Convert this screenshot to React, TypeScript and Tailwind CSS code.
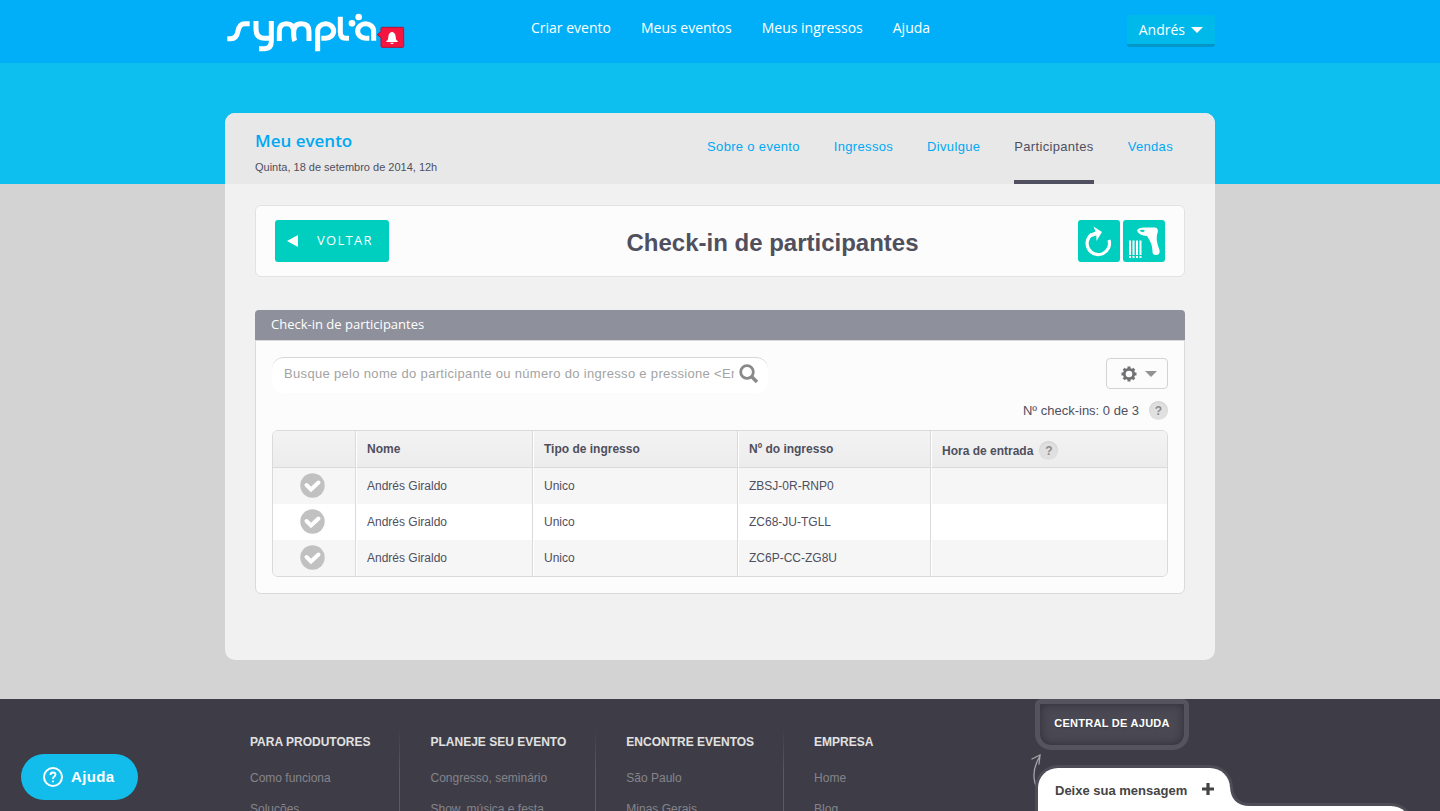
import React from "react";

interface Participant {
  name: string;
  ticketType: string;
  ticketNumber: string;
  entryTime: string;
}

interface FooterColumnProps {
  title: string;
  links: string[];
  last?: boolean;
}

const mainLinks = ["Criar evento", "Meus eventos", "Meus ingressos", "Ajuda"];

const tabs = ["Sobre o evento", "Ingressos", "Divulgue", "Participantes", "Vendas"];

const participants: Participant[] = [
  { name: "Andrés Giraldo", ticketType: "Unico", ticketNumber: "ZBSJ-0R-RNP0", entryTime: "" },
  { name: "Andrés Giraldo", ticketType: "Unico", ticketNumber: "ZC68-JU-TGLL", entryTime: "" },
  { name: "Andrés Giraldo", ticketType: "Unico", ticketNumber: "ZC6P-CC-ZG8U", entryTime: "" },
];

const footerColumns = [
  { title: "PARA PRODUTORES", links: ["Como funciona", "Soluções"] },
  { title: "PLANEJE SEU EVENTO", links: ["Congresso, seminário", "Show, música e festa"] },
  { title: "ENCONTRE EVENTOS", links: ["São Paulo", "Minas Gerais"] },
  { title: "EMPRESA", links: ["Home", "Blog"] },
];

const Logo: React.FC = () => (
  <svg viewBox="0 0 540 120" className="h-10 w-[180px]" role="img" aria-label="Sympla">
    <g fill="none" stroke="#fff" strokeWidth="15">
      <path d="M4 80H14Q32 80 36 57Q40 35 57 35H71" />
      <path d="M90 27V50Q90 79 116 79H134M136 27V88Q136 110 116 110H99" />
      <path d="M160 87V58Q160 35 181 35Q203 35 203 58V64Q203 80 206 87M203 62Q203 35 226 35Q249 35 249 58V87" />
      <path d="M275 118V57A24 22 0 1 1 299 79H286" />
      <path d="M343 14V60Q343 79 359 79H369" />
      <path d="M443 86V57A24 22 0 1 0 419 79H430" />
    </g>
    <circle cx="378" cy="34" r="10" fill="#fff" />
    <circle cx="398" cy="15" r="10" fill="#fff" />
    <path
      d="M468 46H530Q533 46 533 49V103Q533 106 530 106H468Q465 106 465 103V77L454 68L465 59V49Q465 46 468 46Z"
      fill="#f6153f"
      stroke="#b3143a"
      strokeWidth="3"
    />
    <path
      d="M495 61Q498 57 501 61Q509 64 509 76Q509 84 515 87V90H481V87Q487 84 487 76Q487 64 495 61ZM492 92H504Q502 96 498 96Q494 96 492 92Z"
      fill="#fff"
    />
  </svg>
);

const HelpBadge: React.FC = () => (
  <button
    type="button"
    aria-label="Mais informações"
    className="flex h-[19px] w-[19px] shrink-0 items-center justify-center rounded-full bg-[#e0e0e0] text-xs font-bold text-[#8b8b8b] shadow-[inset_0_1px_2px_rgba(0,0,0,0.08)]"
  >
    ?
  </button>
);

const CheckIcon: React.FC = () => (
  <svg viewBox="0 0 25 25" className="h-[25px] w-[25px]">
    <circle cx="12.5" cy="12.5" r="12.2" fill="#c1c1c1" />
    <path d="M6.5 12L11 16.500L18.500 9.500" fill="none" stroke="#fff" strokeWidth="4" strokeLinecap="round" />
  </svg>
);

const GearIcon: React.FC = () => (
  <svg viewBox="0 0 16 16" className="h-4 w-4">
    <circle cx="8" cy="8" r="4.700" fill="none" stroke="#717174" strokeWidth="2.800" />
    <path
      d="M8 0.500V3M8 13V15.500M0.500 8H3M13 8H15.500M2.700 2.700L4.500 4.500M11.500 11.500L13.300 13.300M2.700 13.300L4.500 11.500M11.500 4.500L13.300 2.700"
      stroke="#717174"
      strokeWidth="3"
    />
  </svg>
);

const RefreshIcon: React.FC = () => (
  <svg viewBox="0 0 42 42" className="h-[42px] w-[42px]">
    <path d="M13.500 14.500A11.200 11.200 0 1 0 31 20" fill="none" stroke="#fff" strokeWidth="3.200" />
    <path d="M15.500 6.500L24 12L18.500 21L18.300 15.500L12 17.500L11.500 14L17.500 11.500Z" fill="#fff" />
  </svg>
);

const ScannerIcon: React.FC = () => (
  <svg viewBox="0 0 42 42" className="h-[42px] w-[42px]">
    <path
      d="M14 10.500Q15 8 20 7.500H32Q36 8 34.500 13Q32 19 36.500 30Q37.500 35 33 35Q29 35 29.500 31Q29.500 24 24 16Q16 15.500 14 10.500Z"
      fill="#fff"
    />
    <path d="M16.500 10.500Q19 9 22 10.500Q20 13.500 16.500 10.500Z" fill="#00cfbf" />
    <path d="M7 20.500V35M10.500 20.500V35M14 20.500V35M17.500 20.500V35" stroke="#fff" strokeWidth="2" />
    <path d="M6 37H8M9.500 37H11.500M13 37H15M16.500 37H18.500" stroke="#fff" strokeWidth="2" />
  </svg>
);

const FooterColumn: React.FC<FooterColumnProps> = ({ title, links, last }) => (
  <div className="flex">
    <div className="pr-[29px] pt-[5px]">
      <h2 className="text-xs font-bold leading-4 text-[#e1e1e1]">{title}</h2>
      <ul className="mt-[19px] space-y-[14px]">
        {links.map((link) => (
          <li key={link} className="leading-4">
            <a href="#" className="text-xs leading-4 text-[#85848a]">
              {link}
            </a>
          </li>
        ))}
      </ul>
    </div>
    {!last && <div className="mr-[30px] w-px bg-gradient-to-b from-transparent to-[#5b5a63] to-50%" />}
  </div>
);

const App: React.FC = () => {
  return (
    <div className="h-screen overflow-hidden bg-[#d3d3d3] font-['Liberation_Sans',Arial,sans-serif] text-[#4f4f5e]">
      {/* Top bar */}
      <header className="h-[63px] bg-[#00aff8]">
        <div className="mx-auto flex max-w-[990px] items-start font-['Open_Sans',sans-serif] text-sm text-white">
          <a href="#" className="mt-3 ml-px">
            <Logo />
          </a>
          <nav className="mt-[18px] ml-[125px] flex gap-[30px]">
            {mainLinks.map((link) => (
              <a key={link} href="#" className="leading-5">
                {link}
              </a>
            ))}
          </nav>
          <button
            type="button"
            className="mt-[15px] ml-auto flex h-8 items-center gap-[6px] rounded-[3px] border-b-[3px] border-[#0596c9] bg-[#00b9eb] px-3"
          >
            Andrés
            <svg viewBox="0 0 12 6" className="h-[6px] w-3">
              <path d="M0 0H12L6 6Z" fill="#fff" />
            </svg>
          </button>
        </div>
      </header>

      <main className="bg-[linear-gradient(#0cbfee_121px,#d3d3d3_121px)] pt-[50px] pb-[39px]">
        <div className="mx-auto max-w-[990px] overflow-hidden rounded-[10px] bg-[#f1f1f1]">
          {/* Event header */}
          <div className="flex h-[71px] justify-between bg-[#e8e8e8] px-[30px]">
            <div className="pt-4">
              <h1 className="font-['Open_Sans',sans-serif] text-[17px] font-semibold leading-6 text-[#00a8f3]">
                Meu evento
              </h1>
              <p className="mt-[6px] text-[11px] leading-4">Quinta, 18 de setembro de 2014, 12h</p>
            </div>
            <nav className="mr-3 flex gap-[34px] text-[13px] tracking-wide">
              {tabs.map((tab) => (
                <a
                  key={tab}
                  href="#"
                  className={
                    tab === "Participantes"
                      ? "border-b-4 border-[#505060] pt-[26px] leading-4"
                      : "pt-[26px] leading-4 text-[#00a8f3]"
                  }
                >
                  {tab}
                </a>
              ))}
            </nav>
          </div>

          <div className="px-[30px] pt-[21px] pb-[66px]">
            {/* Page title */}
            <div className="flex h-[72px] items-center rounded-md border border-[#e2e2e2] bg-[#fcfcfc] px-[19px]">
              <button
                type="button"
                className="flex h-[42px] w-[114px] items-center rounded-[3px] bg-[#00cfbf] pl-3 font-['Open_Sans',sans-serif] text-[13px] font-medium tracking-widest text-white"
              >
                <svg viewBox="0 0 11 12" className="mr-[19px] h-3 w-[11px]">
                  <path d="M0 6L11 0V12Z" fill="#fff" />
                </svg>
                VOLTAR
              </button>
              <h2 className="flex-1 pt-1 pl-[78px] text-center text-2xl font-bold">Check-in de participantes</h2>
              <div className="flex gap-[3px]">
                <button type="button" aria-label="Atualizar" className="rounded-[3px] bg-[#00cfbf]">
                  <RefreshIcon />
                </button>
                <button type="button" aria-label="Leitor de código" className="rounded-[3px] bg-[#00cfbf]">
                  <ScannerIcon />
                </button>
              </div>
            </div>

            {/* Check-in panel */}
            <section className="mt-[33px]">
              <h3 className="h-[30px] rounded-t bg-[#8e909b] pl-4 font-['Open_Sans',sans-serif] text-[13px] leading-[29px] text-white">
                Check-in de participantes
              </h3>
              <div className="rounded-b-md border border-[#dadada] bg-[#fcfcfc] p-4">
                <div className="flex items-start justify-between">
                  <div className="flex h-9 w-[496px] items-start rounded-xl border-t border-[#d6d6d6] bg-white pl-3">
                    <input
                      type="text"
                      aria-label="Buscar participante"
                      placeholder="Busque pelo nome do participante ou número do ingresso e pressione <Enter>"
                      className="mt-2 h-4 w-[450px] bg-transparent text-[13px] tracking-wide outline-none placeholder:text-[#a3a3a3]"
                    />
                    <svg viewBox="0 0 20 20" className="mt-[6px] ml-[5px] h-5 w-5">
                      <circle cx="8" cy="8" r="6.300" fill="none" stroke="#89898b" strokeWidth="2.800" />
                      <path d="M12.500 12.500L18 18" stroke="#89898b" strokeWidth="3.400" />
                    </svg>
                  </div>
                  <button
                    type="button"
                    aria-label="Opções"
                    className="mt-px flex h-[31px] w-[62px] items-center gap-2 rounded border border-[#d3d3d3] pl-[14px]"
                  >
                    <GearIcon />
                    <svg viewBox="0 0 12 6" className="h-[6px] w-3">
                      <path d="M0 0H12L6 6Z" fill="#919196" />
                    </svg>
                  </button>
                </div>

                <div className="mt-2 flex items-center justify-end gap-[10px] text-[13px]">
                  <span>Nº check-ins: 0 de 3</span>
                  <HelpBadge />
                </div>

                <div className="mt-[9px] overflow-hidden rounded-md border border-[#dadada]">
                  <table className="w-full table-fixed border-separate border-spacing-0 text-left text-xs">
                    <thead>
                      <tr className="h-[37px] bg-gradient-to-b from-[#f3f3f3] to-[#ececec] [&>th]:border-b [&>th]:border-b-[#dadada]">
                        <th aria-label="Check-in" className="w-[83px] border-r border-r-[#dadada]" />
                        <th className="w-[177px] border-x border-l-white border-r-[#dadada] pl-[10px]">Nome</th>
                        <th className="w-[205px] border-x border-l-white border-r-[#dadada] pl-[10px]">
                          Tipo de ingresso
                        </th>
                        <th className="w-[193px] border-x border-l-white border-r-[#dadada] pl-[10px]">
                          Nº do ingresso
                        </th>
                        <th className="border-l border-l-white pt-1 pl-[10px]">
                          <div className="flex items-center gap-[6px]">
                            Hora de entrada
                            <HelpBadge />
                          </div>
                        </th>
                      </tr>
                    </thead>
                    <tbody>
                      {participants.map((person) => (
                        <tr key={person.ticketNumber} className="h-9 bg-white odd:bg-[#f6f6f6]">
                          <td className="border-r border-[#dadada] pr-1">
                            <button
                              type="button"
                              aria-label={`Check-in ${person.ticketNumber}`}
                              className="mx-auto block"
                            >
                              <CheckIcon />
                            </button>
                          </td>
                          <td className="border-x border-l-white border-r-[#dadada] pl-[10px]">{person.name}</td>
                          <td className="border-x border-l-white border-r-[#dadada] pl-[10px]">
                            {person.ticketType}
                          </td>
                          <td className="border-x border-l-white border-r-[#dadada] pl-[10px]">
                            {person.ticketNumber}
                          </td>
                          <td className="border-l border-white pl-[10px]">{person.entryTime}</td>
                        </tr>
                      ))}
                    </tbody>
                  </table>
                </div>
              </div>
            </section>
          </div>
        </div>
      </main>

      {/* Footer */}
      <footer className="bg-[#3e3d47] pb-10">
        <div className="mx-auto flex max-w-[990px] items-start pl-[25px]">
          <div className="flex pt-[30px]">
            {footerColumns.map((column, index) => (
              <FooterColumn
                key={column.title}
                title={column.title}
                links={column.links}
                last={index === footerColumns.length - 1}
              />
            ))}
          </div>
          <div className="mr-[26px] ml-auto">
            <a
              href="#"
              className="flex h-[51px] w-[154px] items-center justify-center rounded-t-md rounded-b-2xl border-[5px] border-[#54535e] bg-[#4a4953] pb-[2px] text-[11px] font-bold tracking-wide text-white shadow-[inset_0_0_10px_rgba(40,39,48,0.8)] text-shadow-sm"
            >
              CENTRAL DE AJUDA
            </a>
            <svg viewBox="0 0 12 40" className="mt-1 -ml-1 h-10 w-3">
              <path
                d="M7 36Q-2 20 9 2M1 5L9 1L8 10"
                fill="none"
                stroke="#a3a3a8"
                strokeWidth="1.300"
                strokeLinecap="round"
              />
            </svg>
          </div>
        </div>
      </footer>

      {/* Floating help */}
      <button
        type="button"
        className="fixed bottom-[11px] left-[21px] flex h-[46px] w-[117px] items-center gap-2 rounded-full bg-[#12bdec] pl-[22px] text-[15px] font-bold tracking-wide text-white"
      >
        <svg viewBox="0 0 20 20" className="h-5 w-5" fill="none" stroke="#fff">
          <circle cx="10" cy="10" r="9" strokeWidth="2" />
          <path d="M7.500 8Q7.500 5.500 10 5.500Q12.500 5.500 12.500 7.600Q12.500 9 10.800 10Q10 10.500 10 12" strokeWidth="1.800" />
          <path d="M10 13.500V15.300" strokeWidth="1.800" />
        </svg>
        Ajuda
      </button>

      {/* Message widget */}
      <div className="fixed right-[26px] -bottom-6 w-[379px]">
        <button
          type="button"
          className="relative -mb-[3px] flex h-[41px] w-[198px] items-center justify-between rounded-t-[23px] border-x-[3px] border-t-[3px] border-[#4d4c57] bg-white pt-2 pr-4 pl-[17px] text-[13px] font-bold text-[#444]"
        >
          Deixe sua mensagem
          <svg viewBox="0 0 12 12" className="mb-1 h-3 w-3">
            <path d="M6 0V12M0 6H12" stroke="#444" strokeWidth="3.200" />
          </svg>
          <svg viewBox="0 0 20 20" className="absolute -right-5 bottom-0 h-5 w-5">
            <path d="M1.500 0Q2 18.500 20 18.500V20H0V0Z" fill="#fff" />
            <path d="M1.500 0Q2 18.500 20 18.500" fill="none" stroke="#4d4c57" strokeWidth="3" />
          </svg>
        </button>
        <div className="h-8 rounded-tr-[23px] border-x-[3px] border-t-[3px] border-[#4d4c57] bg-white" />
      </div>
    </div>
  );
};

export default App;
